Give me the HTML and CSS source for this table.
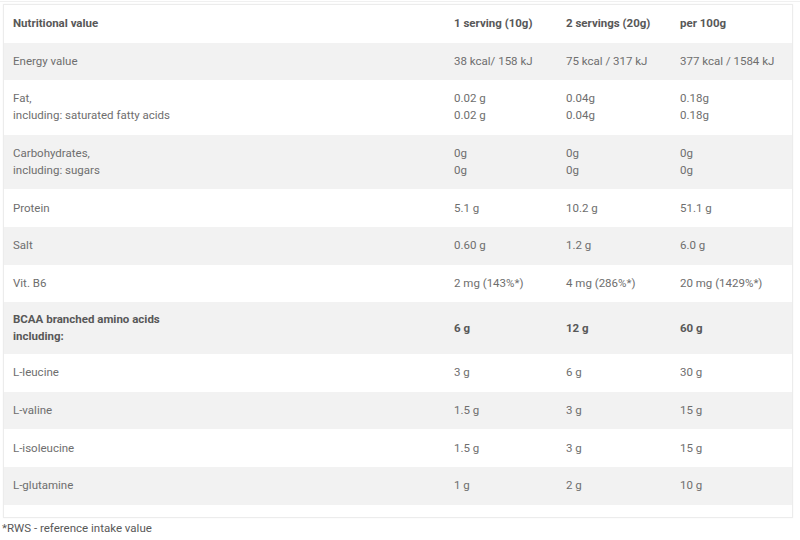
FILE: index.html
```html
<!DOCTYPE html>
<html>
<head>
<meta charset="utf-8">
<link rel="stylesheet" href="styles.css">
</head>
<body>
<div class="topline"></div>
<div class="box">
<table class="nt">
<colgroup><col class="c0"><col class="c1"><col class="c2"><col class="c3"></colgroup>
<thead>
<tr><th>Nutritional value</th><th>1 serving (10g)</th><th>2 servings (20g)</th><th>per 100g</th></tr>
</thead>
<tbody>
<tr class="alt"><td>Energy value</td><td>38 kcal/ 158 kJ</td><td>75 kcal / 317 kJ</td><td>377 kcal / 1584 kJ</td></tr>
<tr><td>Fat,<br>including: saturated fatty acids</td><td>0.02 g<br>0.02 g</td><td>0.04g<br>0.04g</td><td>0.18g<br>0.18g</td></tr>
<tr class="alt"><td>Carbohydrates,<br>including: sugars</td><td>0g<br>0g</td><td>0g<br>0g</td><td>0g<br>0g</td></tr>
<tr><td>Protein</td><td>5.1 g</td><td>10.2 g</td><td>51.1 g</td></tr>
<tr class="alt"><td>Salt</td><td>0.60 g</td><td>1.2 g</td><td>6.0 g</td></tr>
<tr><td>Vit. B6</td><td>2 mg (143%*)</td><td>4 mg (286%*)</td><td>20 mg (1429%*)</td></tr>
<tr class="alt bold"><td>BCAA branched amino acids<br>including:</td><td>6 g</td><td>12 g</td><td>60 g</td></tr>
<tr><td>L-leucine</td><td>3 g</td><td>6 g</td><td>30 g</td></tr>
<tr class="alt"><td>L-valine</td><td>1.5 g</td><td>3 g</td><td>15 g</td></tr>
<tr><td>L-isoleucine</td><td>1.5 g</td><td>3 g</td><td>15 g</td></tr>
<tr class="alt"><td>L-glutamine</td><td>1 g</td><td>2 g</td><td>10 g</td></tr>
</tbody>
</table>
<div class="spacer"></div>
</div>
<p class="note">*RWS - reference intake value</p>
</body>
</html>
```
FILE: styles.css
```css
html, body {
  margin: 0;
  padding: 0;
  background: #fff;
}
body {
  font-family: Roboto, "Liberation Sans", sans-serif;
  font-size: 11.5px;
  color: #6e6e6e;
}
.topline {
  height: 1px;
  margin-top: 1px;
  background: #f0f0f0;
}
.box {
  margin: 2px 0 0 3px;
  width: 788px;
  border: 1px solid #ececec;
  box-shadow: 0 0 2px rgba(0,0,0,0.04);
}
.nt {
  width: 100%;
  border-collapse: collapse;
  table-layout: fixed;
}
.c0 { width: 441px; }
.c1 { width: 112px; }
.c2 { width: 114px; }
.c3 { width: auto; }
.nt th, .nt td {
  text-align: left;
  vertical-align: middle;
  padding: 10.3px 0 10.3px 9px;
  line-height: 17px;
  font-weight: 400;
}
.nt th {
  font-weight: 700;
  color: #585858;
}
.nt tr.alt td {
  background: #f2f2f2;
}
.nt tr.bold td {
  font-weight: 700;
  color: #585858;
  padding: 9px 0 9px 9px;
}
.spacer {
  height: 12px;
}
.note {
  margin: 2px 0 0 2px;
  line-height: 16px;
  color: #585858;
}
```
